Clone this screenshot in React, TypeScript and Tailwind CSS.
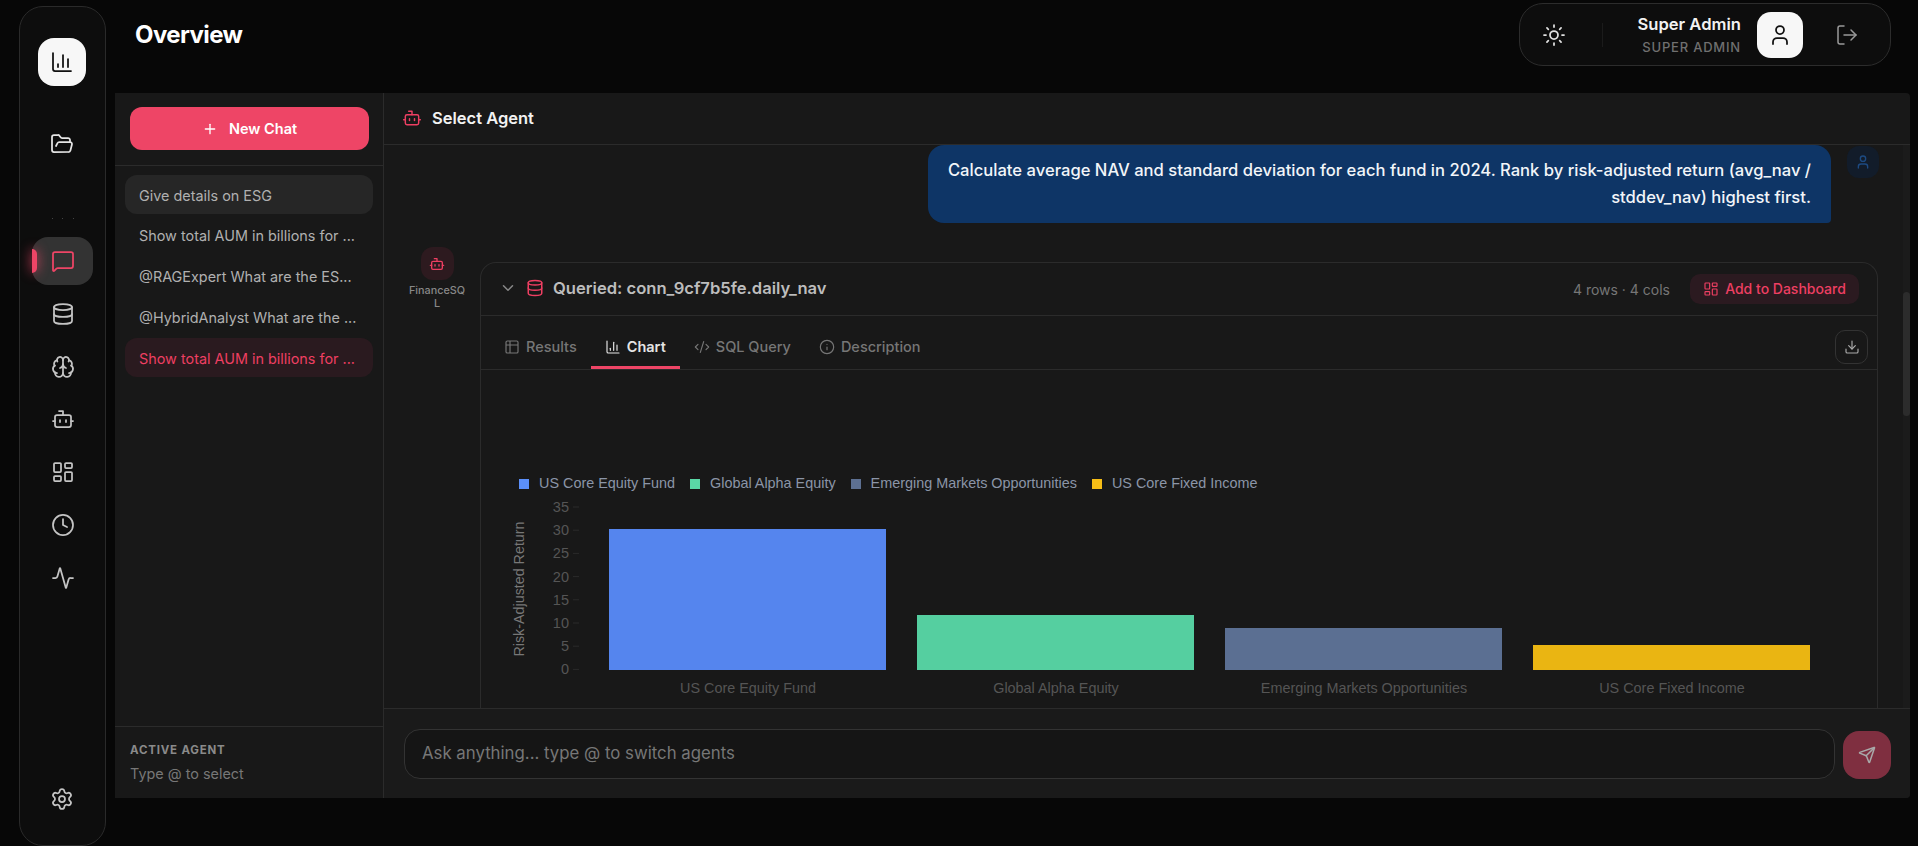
import {
  Activity, Bot, Brain, ChartColumn, ChevronDown, Clock, CodeXml, Database, Download, FolderOpen, Info,
  LayoutDashboard, LogOut, MessageSquare, Plus, Send, Settings, Sun, Table2, User,
} from 'lucide-react'

const chats = [
  { title: 'Give details on ESG', cls: 'bg-[#262626] text-[#b0b0b0]' },
  { title: 'Show total AUM in billions for ...', cls: 'text-[#b0b0b0]' },
  { title: '@RAGExpert What are the ES...', cls: 'text-[#b0b0b0]' },
  { title: '@HybridAnalyst What are the ...', cls: 'text-[#b0b0b0]' },
  { title: 'Show total AUM in billions for ...', cls: 'bg-[#2a1a1f] text-[#ee3f62]' },
]

const series = [
  { name: 'US Core Equity Fund', color: '#5585ee', swatch: 'bg-[#5b8ff9]', x: 128, y: 35, h: 141 },
  { name: 'Global Alpha Equity', color: '#55cfa0', swatch: 'bg-[#5ad8a6]', x: 436, y: 121, h: 55 },
  { name: 'Emerging Markets Opportunities', color: '#5b6f92', swatch: 'bg-[#5d7092]', x: 744, y: 134, h: 42 },
  { name: 'US Core Fixed Income', color: '#eab512', swatch: 'bg-[#f6bd16]', x: 1052, y: 151, h: 25 },
]

const ticks = [35, 30, 25, 20, 15, 10, 5, 0]

function Sidebar() {
  return (
    <aside className="mt-[6px] flex h-[840px] w-[87px] shrink-0 flex-col items-center rounded-[24px] border border-[#2a2a2a] bg-[#0d0d0d] pt-[31px] pb-[22px]">
      <div className="mr-px flex h-12 w-12 items-center justify-center rounded-2xl bg-[#f7f7f7] text-[#111]">
        <ChartColumn size={24} strokeWidth={1.75} />
      </div>
      <div className="mt-[34px] mr-px flex h-12 w-12 items-center justify-center text-[#e5e5e5]">
        <FolderOpen size={24} strokeWidth={1.75} />
      </div>
      <div className="mt-[50px] flex h-px w-[22px] justify-between">
        <span className="h-px w-px bg-[#444]" />
        <span className="h-px w-px bg-[#444]" />
        <span className="h-px w-px bg-[#444]" />
      </div>
      <div className="mt-[18px] flex flex-col items-center gap-[4.8px] text-[#c4c4c4]">
        <div className="relative flex h-12 w-[61px] items-center justify-center rounded-2xl bg-[#333333] pl-px text-[#ee4566]">
          <span className="absolute top-3 left-0 h-6 w-[5px] rounded-r-md bg-[#ee4566] shadow-[0_0_12px_#ee4566]" />
          <MessageSquare size={24} strokeWidth={1.75} />
        </div>
        <div className="flex h-12 w-12 items-center justify-center"><Database size={24} strokeWidth={1.75} /></div>
        <div className="flex h-12 w-12 items-center justify-center"><Brain size={24} strokeWidth={1.75} /></div>
        <div className="flex h-12 w-12 items-center justify-center"><Bot size={24} strokeWidth={1.75} /></div>
        <div className="flex h-12 w-12 items-center justify-center"><LayoutDashboard size={24} strokeWidth={1.75} /></div>
        <div className="flex h-12 w-12 items-center justify-center"><Clock size={24} strokeWidth={1.75} /></div>
        <div className="flex h-12 w-12 items-center justify-center"><Activity size={24} strokeWidth={1.75} /></div>
      </div>
      <div className="mt-auto mr-px flex h-12 w-12 items-center justify-center text-[#c4c4c4]">
        <Settings size={24} strokeWidth={1.75} />
      </div>
    </aside>
  )
}

function TopBar() {
  return (
    <header className="flex h-[93px] shrink-0 items-start justify-between pl-5 pr-[19px]">
      <h1 className="mt-[19px] text-2xl font-bold tracking-tight text-white">Overview</h1>
      <div className="mt-[3px] flex h-[63px] w-[372px] items-center rounded-[24px] border border-[#2c2c2c] bg-[#0d0d0d]">
        <div className="ml-[22px] text-[#e0e0e0]"><Sun size={24} strokeWidth={1.75} /></div>
        <div className="ml-[36px] h-6 w-px bg-[#1b1b1b]" />
        <div className="ml-auto flex flex-col items-end">
          <span className="text-[16.6px] leading-[22px] font-semibold text-[#f2f2f2]">Super Admin</span>
          <span className="mt-[2px] text-[13px] leading-[20px] font-medium tracking-[0.8px] text-[#707070]">SUPER ADMIN</span>
        </div>
        <div className="ml-4 flex h-[46px] w-[46px] items-center justify-center rounded-[14px] bg-[#f7f7f7] text-[#111]">
          <User size={24} strokeWidth={1.75} />
        </div>
        <div className="mr-[31px] ml-[32px] text-[#999]"><LogOut size={24} strokeWidth={1.5} /></div>
      </div>
    </header>
  )
}

function ChatList() {
  return (
    <section className="flex w-[269px] shrink-0 flex-col border-r border-[#2b2b2b] bg-[#181818]">
      <div className="border-b border-[#2b2b2b] px-[15px] pt-[14px] pb-[15px]">
        <button className="flex h-[43px] w-[239px] items-center justify-center gap-[11px] rounded-xl bg-[#ee4566] text-[14.5px] font-semibold text-white">
          <Plus size={16} strokeWidth={2} />
          New Chat
        </button>
      </div>
      <div className="flex flex-1 flex-col gap-0.5 px-[10px] pt-[9px]">
        {chats.map((c, i) => (
          <div key={i} className={`flex h-[38.75px] w-[248px] items-center rounded-xl px-[14px] pt-[2px] text-[14.4px] ${c.cls}`}>
            {c.title}
          </div>
        ))}
      </div>
      <div className="h-[72px] border-t border-[#2b2b2b] px-[15px] pt-[15px]">
        <div className="text-[11.5px] leading-[17px] font-bold tracking-[0.8px] text-[#8a8a8a]">ACTIVE AGENT</div>
        <div className="mt-[5px] text-[14.4px] leading-5 text-[#777]">Type @ to select</div>
      </div>
    </section>
  )
}

function BarChart() {
  return (
    <svg width="1396" height="214" className="block font-['Liberation_Sans',Arial,sans-serif]">
      <text transform="translate(43 95) rotate(-90)" textAnchor="middle" fontSize="14.3" fill="#777777">Risk-Adjusted Return</text>
      {ticks.map((t, i) => (
        <g key={t}>
          <text x="88" y={18 + i * 23.2} textAnchor="end" fontSize="14.5" fill="#555555">{t}</text>
          <line x1="92" x2="98" y1={13 + i * 23.2} y2={13 + i * 23.2} stroke="#2a2a2a" />
        </g>
      ))}
      {series.map(s => (
        <g key={s.name}>
          <rect x={s.x} y={s.y} width="277" height={s.h} fill={s.color} />
          <text x={s.x + 139} y="199" textAnchor="middle" fontSize="14.4" fill="#555555">{s.name}</text>
        </g>
      ))}
    </svg>
  )
}

function QueryCard() {
  return (
    <div className="mt-[15px] w-[1398px] rounded-t-2xl border border-b-0 border-[#2b2b2b]">
      <div className="flex h-[53px] items-center border-b border-[#2b2b2b] pr-[18px] pb-[2px] pl-[18px]">
        <ChevronDown size={18} strokeWidth={2} className="text-[#888]" />
        <Database size={18} strokeWidth={2} className="ml-[9px] text-[#ee3f62]" />
        <span className="ml-[9px] text-[16.6px] font-semibold text-[#bdbdbd]">Queried: conn_9cf7b5fe.daily_nav</span>
        <span className="mt-1 ml-auto text-sm text-[#767676]">4 rows · 4 cols</span>
        <button className="mt-[2px] ml-[20px] flex h-[30px] w-[169px] items-center justify-center gap-1.5 rounded-[10px] bg-[#2b1a20] text-sm font-medium text-[#ee3f62]">
          <LayoutDashboard size={16} strokeWidth={1.75} />
          Add to Dashboard
        </button>
      </div>
      <div className="flex h-[54px] items-center border-b border-[#2b2b2b] pr-[9px] pl-[9px]">
        <div className="flex h-full items-center gap-1.5 px-[14px] pt-[9px] text-[14.5px] font-medium text-[#767676]">
          <Table2 size={16} strokeWidth={1.75} />Results
        </div>
        <div className="flex h-full items-center gap-1.5 border-b-[3px] border-[#ee4566] px-[14px] pt-[12px] text-[14.5px] font-semibold text-[#e5e5e5]">
          <ChartColumn size={16} strokeWidth={1.75} />Chart
        </div>
        <div className="flex h-full items-center gap-1.5 px-[14px] pt-[9px] text-[14.5px] font-medium text-[#767676]">
          <CodeXml size={16} strokeWidth={1.75} />SQL Query
        </div>
        <div className="flex h-full items-center gap-1.5 px-[14px] pt-[9px] text-[14.5px] font-medium text-[#767676]">
          <Info size={16} strokeWidth={1.75} />Description
        </div>
        <button className="mt-[9px] ml-auto flex h-[34px] w-[33px] items-center justify-center rounded-[10px] border border-[#333] text-[#aaa]">
          <Download size={16} strokeWidth={1.75} />
        </button>
      </div>
      <div className="mt-[104px] flex h-[20px] items-center gap-[10px] pl-[38px] font-['Liberation_Sans',Arial,sans-serif] text-[14.4px] text-[#8b95a7]">
        {series.map(s => (
          <div key={s.name} className="flex items-center gap-[10px] pr-[5px]">
            <span className={`h-[10px] w-[10px] ${s.swatch}`} />
            {s.name}
          </div>
        ))}
      </div>
      <BarChart />
    </div>
  )
}

function Conversation() {
  return (
    <section className="flex min-w-0 flex-1 flex-col bg-[#181818]">
      <div className="flex h-[52px] items-center gap-[10px] border-b border-[#2b2b2b] pb-px pl-[18px] text-[16.5px] font-semibold text-[#f2f2f2]">
        <Bot size={20} strokeWidth={1.75} className="text-[#ee3f62]" />
        Select Agent
      </div>
      <div className="flex min-h-0 flex-1">
        <div className="min-w-0 flex-1 overflow-hidden">
          <div className="flex items-start justify-end gap-4 pr-[24px]">
            <div className="h-[78px] w-[903px] rounded-2xl rounded-br-[4px] bg-[#0e3566] py-3 pr-5 pl-3 text-right text-[16.6px] leading-[27px] font-medium text-[#f2f5f9]">
              Calculate average NAV and standard deviation for each fund in 2024. Rank by risk-adjusted return (avg_nav / stddev_nav) highest first.
            </div>
            <div className="mt-px flex h-8 w-8 items-center justify-center rounded-xl bg-[#121c2a] text-[#1d4a82]">
              <User size={16} strokeWidth={2} />
            </div>
          </div>
          <div className="mt-6 flex items-start gap-[13px] pl-[23px]">
            <div className="flex w-[60px] shrink-0 flex-col items-center">
              <div className="flex h-[33px] w-[33px] items-center justify-center rounded-xl bg-[#2d1a1f] text-[#ee3f62]">
                <Bot size={16} strokeWidth={2} />
              </div>
              <div className="mt-[4px] w-full text-center text-[10.8px] leading-[13px] font-medium break-all text-[#888]">FinanceSQL</div>
            </div>
            <QueryCard />
          </div>
        </div>
        <div className="w-[7px] shrink-0 bg-[#1b1b1b] pt-[147px]">
          <div className="h-[124px] w-full rounded-full bg-[#2c2c2c]" />
        </div>
      </div>
      <div className="flex h-[90px] items-start gap-[8px] border-t border-[#2b2b2b] bg-[#1a1a1a] pt-5 pr-[19px] pl-5">
        <div className="flex h-[50px] flex-1 items-center rounded-2xl border border-[#333] bg-[#151515] pl-[17px] text-[16.8px] text-[#777]">
          Ask anything... type @ to switch agents
        </div>
        <button className="mt-[2px] flex h-12 w-12 items-center justify-center rounded-2xl bg-[#7f2f40] text-[#a9a9a9]">
          <Send size={18} strokeWidth={2} />
        </button>
      </div>
    </section>
  )
}

export default function App() {
  return (
    <div className="flex h-screen w-full overflow-hidden bg-[#070707] pl-[19px] font-['Inter',sans-serif]">
      <Sidebar />
      <main className="ml-[9px] flex min-w-0 flex-1 flex-col pr-2">
        <TopBar />
        <div className="flex h-[705px] overflow-hidden rounded-r-sm">
          <ChatList />
          <Conversation />
        </div>
      </main>
    </div>
  )
}
